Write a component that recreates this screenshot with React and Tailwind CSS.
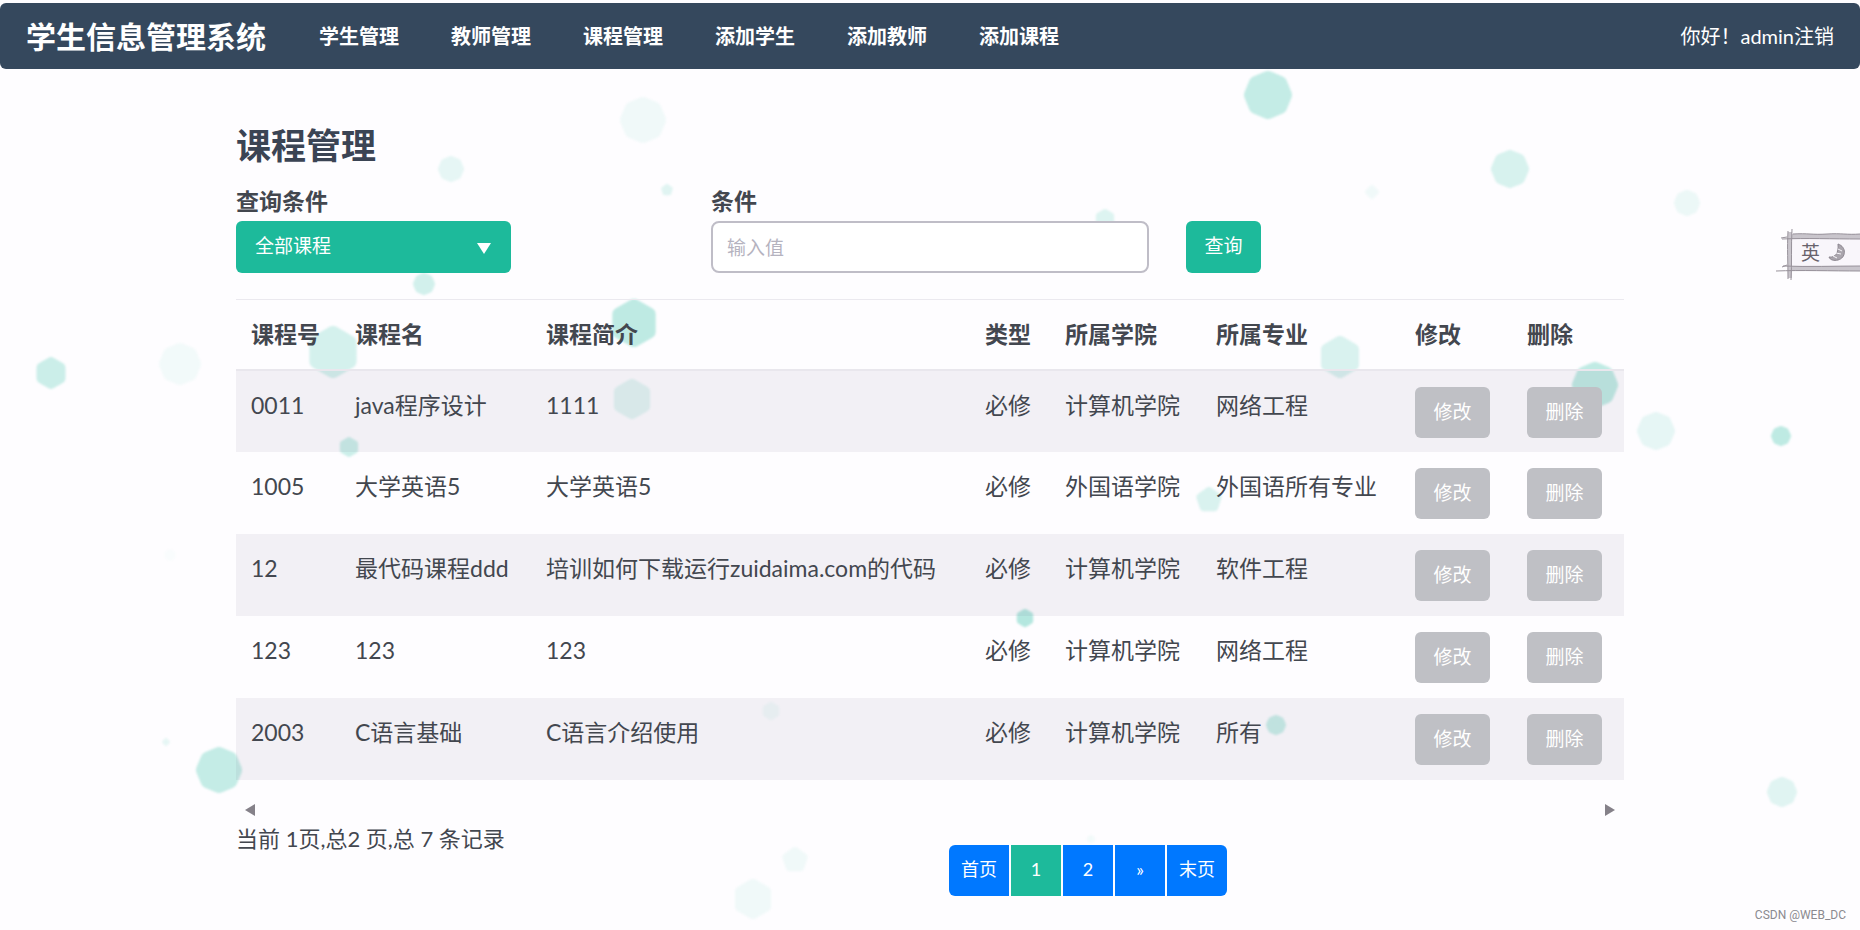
import { useState } from 'react'

const NAV_ITEMS = ['学生管理', '教师管理', '课程管理', '添加学生', '添加教师', '添加课程']

const COLUMNS = [
  { title: '课程号', width: 'w-[104px]' },
  { title: '课程名', width: 'w-[191px]' },
  { title: '课程简介', width: 'w-[439px]' },
  { title: '类型', width: 'w-[80px]' },
  { title: '所属学院', width: 'w-[151px]' },
  { title: '所属专业', width: 'w-[199px]' },
  { title: '修改', width: 'w-[112px]' },
  { title: '删除', width: 'w-[112px]' },
]

const COURSES = [
  { id: '0011', name: 'java程序设计', intro: '1111', type: '必修', college: '计算机学院', major: '网络工程' },
  { id: '1005', name: '大学英语5', intro: '大学英语5', type: '必修', college: '外国语学院', major: '外国语所有专业' },
  { id: '12', name: '最代码课程ddd', intro: '培训如何下载运行zuidaima.com的代码', type: '必修', college: '计算机学院', major: '软件工程' },
  { id: '123', name: '123', intro: '123', type: '必修', college: '计算机学院', major: '网络工程' },
  { id: '2003', name: 'C语言基础', intro: 'C语言介绍使用', type: '必修', college: '计算机学院', major: '所有' },
]

const PAGES = [
  { label: '首页', wide: true },
  { label: '1', active: true },
  { label: '2' },
  { label: '»' },
  { label: '末页', wide: true },
]

// 背景粒子: x, y, 半径, 边数, 透明度
const PARTICLES = [
  [1268, 95, 24, 8, 0.25],
  [1510, 169, 19, 8, 0.17],
  [643, 120, 23, 8, 0.06],
  [451, 169, 13, 8, 0.1],
  [667, 190, 6, 5, 0.13],
  [1372, 192, 7, 4, 0.06],
  [1687, 203, 13, 8, 0.08],
  [1105, 219, 10, 6, 0.14],
  [424, 284, 11, 8, 0.19],
  [634, 323, 24, 6, 0.28],
  [333, 352, 26, 6, 0.18],
  [51, 373, 16, 6, 0.22],
  [180, 364, 21, 8, 0.05],
  [632, 399, 20, 6, 0.12],
  [349, 447, 10, 6, 0.22],
  [1209, 500, 13, 5, 0.16],
  [1340, 357, 21, 6, 0.16],
  [1595, 385, 23, 8, 0.27],
  [1656, 431, 19, 8, 0.1],
  [1781, 436, 10, 8, 0.28],
  [1025, 618, 9, 6, 0.32],
  [771, 711, 9, 6, 0.05],
  [1276, 725, 10, 8, 0.23],
  [1782, 792, 15, 8, 0.13],
  [219, 770, 23, 8, 0.25],
  [166, 742, 4, 4, 0.1],
  [170, 555, 6, 6, 0.02],
  [795, 860, 13, 5, 0.06],
  [753, 899, 20, 6, 0.06],
  [1091, 839, 4, 6, 0.05],
]

const polygonPoints = (cx, cy, r, sides) =>
  Array.from({ length: sides }, (_, i) => {
    const angle = (Math.PI * 2 * i) / sides - Math.PI / 2
    return `${(cx + r * Math.cos(angle)).toFixed(1)},${(cy + r * Math.sin(angle)).toFixed(1)}`
  }).join(' ')

function Particles() {
  return (
    <svg className="pointer-events-none absolute inset-0 -z-10 h-full w-full blur-[1px]" aria-hidden="true">
      {/* 圆角描边让多边形的角更柔和 */}
      {PARTICLES.map(([x, y, r, sides, opacity]) => (
        <polygon
          key={`${x}-${y}`}
          points={polygonPoints(x, y, r * 0.7, sides)}
          fill="#1abc9c"
          stroke="#1abc9c"
          strokeWidth={r * 0.6}
          strokeLinejoin="round"
          opacity={opacity}
        />
      ))}
    </svg>
  )
}

function Navbar() {
  return (
    <header className="flex h-[66px] items-center rounded-md bg-[#35485d] px-[26px] text-xl text-white">
      <a href="#" className="text-[30px] leading-[40px] font-bold">学生信息管理系统</a>
      <nav className="ml-[53px] flex gap-[52px] font-bold">
        {NAV_ITEMS.map((item) => (
          <a key={item} href="#" className="hover:text-[#1abc9c]">{item}</a>
        ))}
      </nav>
      <p className="ml-auto">
        你好！admin<a href="#">注销</a>
      </p>
    </header>
  )
}

function SearchForm() {
  const [keyword, setKeyword] = useState('')

  return (
    <form className="mt-[21px] flex items-end" onSubmit={(e) => e.preventDefault()}>
      <div className="w-[475px]">
        <label htmlFor="scope" className="mb-[5px] block font-bold">查询条件</label>
        <div className="relative w-[275px]">
          <select
            id="scope"
            className="block h-[52px] w-full appearance-none rounded-md bg-[#1dba9b] px-[19px] pb-[2px] text-[19px] text-white"
          >
            <option>全部课程</option>
            <option>课程号</option>
            <option>课程名</option>
          </select>
          <svg className="pointer-events-none absolute top-[22px] right-[20px] h-[11px] w-[14px]" viewBox="0 0 14 11">
            <path d="M0 0h14L7 11z" fill="#fff" />
          </svg>
        </div>
      </div>
      <div className="w-[438px]">
        <label htmlFor="keyword" className="mb-[5px] block font-bold">条件</label>
        <input
          id="keyword"
          type="text"
          placeholder="输入值"
          value={keyword}
          onChange={(e) => setKeyword(e.target.value)}
          className="block h-[52px] w-full rounded-lg border-2 border-[#bfbdc7] bg-white px-[14px] text-[19px] placeholder:text-[#b5b3bf]"
        />
      </div>
      <button type="submit" className="ml-[37px] h-[52px] w-[75px] rounded-md bg-[#1dba9b] pb-[2px] text-[19px] text-white">
        查询
      </button>
    </form>
  )
}

function RowButton({ children }) {
  return (
    <button type="button" className="block h-[51px] w-[75px] rounded-md bg-[#bfc0c5] text-[19px] text-white">
      {children}
    </button>
  )
}

function CourseTable() {
  return (
    <table className="mt-[26px] w-full table-fixed border-t border-[#ebe9ef] text-left">
      <thead>
        <tr className="h-[70px] border-b-2 border-[#e9e7ed]">
          {COLUMNS.map((col) => (
            <th key={col.title} scope="col" className={`${col.width} px-[15px] font-bold`}>{col.title}</th>
          ))}
        </tr>
      </thead>
      <tbody>
        {COURSES.map((course) => (
          <tr key={course.id} className="h-[82px] align-top odd:bg-[#5a4678]/7">
            <td className="px-[15px] pt-[19px]">{course.id}</td>
            <td className="px-[15px] pt-[19px]">{course.name}</td>
            <td className="px-[15px] pt-[19px]">{course.intro}</td>
            <td className="px-[15px] pt-[19px]">{course.type}</td>
            <td className="px-[15px] pt-[19px]">{course.college}</td>
            <td className="px-[15px] pt-[19px]">{course.major}</td>
            <td className="px-[15px] pt-4"><RowButton>修改</RowButton></td>
            <td className="px-[15px] pt-4"><RowButton>删除</RowButton></td>
          </tr>
        ))}
      </tbody>
    </table>
  )
}

function Pagination() {
  return (
    <nav className="mt-[21px] flex gap-[2px] overflow-hidden rounded-md text-lg text-white" aria-label="分页">
      {PAGES.map((page) => (
        <a
          key={page.label}
          href="#"
          className={`flex h-[51px] items-center justify-center pb-[2px] ${page.wide ? 'w-[60px]' : 'w-[50px]'} ${
            page.active ? 'bg-[#1dba9b]' : 'bg-[#0078ff]'
          }`}
        >
          {page.label}
        </a>
      ))}
    </nav>
  )
}

// 右侧悬浮的输入法状态栏
function ImeBar() {
  return (
    <div className="absolute top-[228px] right-0 h-[54px] w-[86px]">
      <svg className="absolute inset-0" width="86" height="54" viewBox="0 0 86 54" fill="none">
        <path d="M17 11h69v27H17z" fill="#f9f6fb" />
        <path d="M17 6h69v5H17zM17 38h69v5H17zM14 4h4v46h-4z" fill="#c9c5cc" />
        <path
          d="M19 6c14-1 20 1 34 0s20 1 33 0M8 11c24-1 50 0 78 0M9 38c25 1 52 0 77 0M2 43c24-1 56 0 84 0M14 3c-1 16 0 34 0 48M18 1c-1 17 0 34-1 51M7 10l6-1M8 39l5-2"
          stroke="#98929b"
        />
        <path d="M64 16c9 3 8 14 0 16-4 1-8 0-9-3 6 1 10-4 9-13z" fill="#aaa5ad" stroke="#8b858e" />
        <path d="M64 21l4 2M62 25l5 1M59 28l4 2" stroke="#f8f5fa" />
      </svg>
      <span className="absolute top-[13px] left-[27px] text-[19px] leading-[24px] text-[#68626c]">英</span>
    </div>
  )
}

export default function App() {
  return (
    <div className="relative isolate min-h-screen overflow-hidden bg-[#fefdff] pt-[3px] font-[Lato,'Noto_Sans_CJK_SC',sans-serif] text-[23px] leading-[30px] text-[#43474f]">
      <Particles />
      <Navbar />
      <main className="mx-auto max-w-[1388px] pt-14">
        <h1 className="text-[35px] leading-[40px] font-bold text-[#3b4454]">课程管理</h1>
        <SearchForm />
        <CourseTable />
        <div className="mt-[24px] flex h-[12px] justify-between px-[9px]" aria-hidden="true">
          <svg width="10" height="12" viewBox="0 0 10 12"><path d="M10 0v12L0 6z" fill="#858189" /></svg>
          <svg width="10" height="12" viewBox="0 0 10 12"><path d="M0 0v12l10-6z" fill="#858189" /></svg>
        </div>
        <div className="mt-2 flex items-start">
          <p className="w-[713px] text-[22px]">当前 1页,总2 页,总 7 条记录</p>
          <Pagination />
        </div>
      </main>
      <ImeBar />
      <p className="absolute right-[14px] bottom-[6px] font-[Roboto,sans-serif] text-xs leading-[18px] text-[#8b8a90]">
        CSDN @WEB_DC
      </p>
    </div>
  )
}
